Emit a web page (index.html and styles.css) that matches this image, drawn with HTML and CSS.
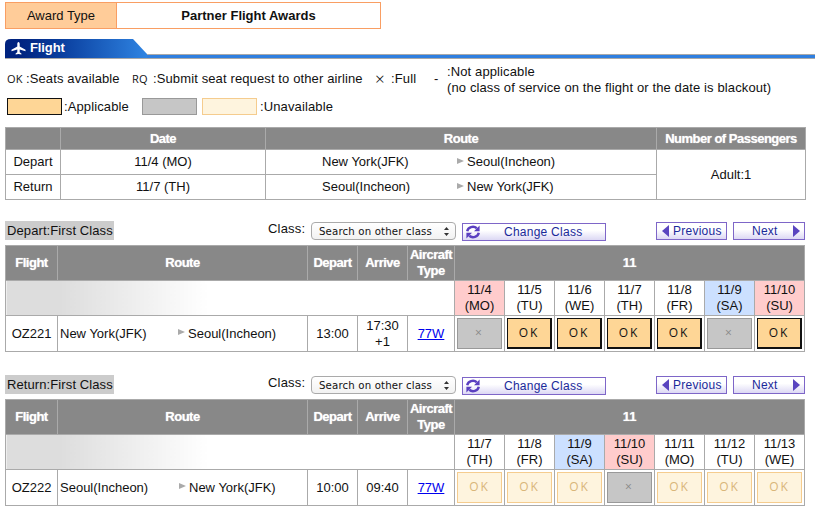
FILE: index.html
```html
<!DOCTYPE html>
<html lang="en">
<head>
<meta charset="utf-8">
<title>Partner Flight Awards</title>
<link rel="stylesheet" href="styles.css">
</head>
<body>
<div class="award">
  <div class="award-label">Award Type</div>
  <div class="award-value">Partner Flight Awards</div>
</div>

<div class="section-bar">
  <div class="tab">
    <svg class="tab-bg" width="142" height="19" viewBox="0 0 142 19"><defs><linearGradient id="tabg" x1="0" x2="1" y1="0" y2="0"><stop offset="0.1" stop-color="#00237f"/><stop offset="0.4" stop-color="#0a3f9f"/><stop offset="1" stop-color="#2f84e2"/></linearGradient></defs><path d="M0 19V5Q0 0 6 0H128L142 15V19Z" fill="url(#tabg)"/></svg>
    <svg class="plane" width="15" height="13" viewBox="0 0 15 13"><path d="M7.5 0C8.3 0 8.7 1 8.7 2V4.6L14.5 7.8V9.2L8.7 7.6V10.2L10.4 11.6V12.6L7.5 12 4.6 12.6V11.6L6.3 10.2V7.6L.5 9.2V7.8L6.3 4.6V2C6.3 1 6.7 0 7.5 0Z" fill="#fff"/></svg>
    <span class="tab-text">Flight</span>
  </div>
</div>

<div class="legend">
  <span class="mono k-ok">OK</span><span class="l-ok">:Seats available</span>
  <span class="mono k-rq">RQ</span><span class="l-rq">:Submit seat request to other airline</span>
  <span class="k-x">×</span><span class="l-x">:Full</span>
  <span class="k-dash">-</span><span class="l-na">:Not applicable<br>(no class of service on the flight or the date is blackout)</span>
</div>
<div class="legend2">
  <span class="swatch sw-a"></span><span class="l-a">:Applicable</span>
  <span class="swatch sw-f"></span><span class="swatch sw-u"></span><span>:Unavailable</span>
</div>

<table class="summary">
  <colgroup><col class="s1"><col class="s2"><col class="s3"><col class="s4"></colgroup>
  <tr class="sum-head"><th></th><th>Date</th><th>Route</th><th class="pax-h">Number of Passengers</th></tr>
  <tr class="sum-r1"><td>Depart</td><td>11/4 (MO)</td><td><div class="sum-route"><span class="from">New York(JFK)</span><i class="arrow"></i><span>Seoul(Incheon)</span></div></td><td rowspan="2">Adult:1</td></tr>
  <tr class="sum-r2"><td>Return</td><td>11/7 (TH)</td><td><div class="sum-route"><span class="from">Seoul(Incheon)</span><i class="arrow"></i><span>New York(JFK)</span></div></td></tr>
</table>

<div class="toolbar t1">
  <div class="title">Depart:First Class</div>
  <div class="class-label">Class:</div>
  <div class="select-wrap"><select class="select"><option>Search on other class</option></select><svg class="updown" width="7" height="11" viewBox="0 0 7 11"><path d="M3.5 1 6 4H1ZM3.5 10 1 7H6Z" fill="#333"/></svg></div>
  <a class="btn change"><svg width="18" height="16" viewBox="0 0 18 16"><path d="M3.2 7.2A5.8 5.3 0 0 1 12.8 4.2M14.8 8.8A5.8 5.3 0 0 1 5.2 11.8" fill="none" stroke="#5a3fc0" stroke-width="2.4"/><path d="M15.6 1.6V7.2H10ZM2.4 14.4V8.8H8Z" fill="#5a3fc0"/></svg><span>Change Class</span></a>
  <a class="btn prev"><i class="tri-l"></i><span>Previous</span></a>
  <a class="btn next"><span>Next</span><i class="tri-r"></i></a>
</div>
<table class="flights">
  <colgroup><col class="f1"><col class="f2"><col class="f3"><col class="f4"><col class="f5"><col class="d"><col class="d"><col class="d"><col class="d"><col class="d"><col class="d"><col class="d"></colgroup>
  <tr class="fh"><th>Flight</th><th>Route</th><th>Depart</th><th>Arrive</th><th class="type">Aircraft<br>Type</th><th colspan="7" class="month">11</th></tr>
  <tr class="dates"><td colspan="5" class="fade"></td><td class="sun">11/4<br>(MO)</td><td>11/5<br>(TU)</td><td>11/6<br>(WE)</td><td>11/7<br>(TH)</td><td>11/8<br>(FR)</td><td class="sat">11/9<br>(SA)</td><td class="sun">11/10<br>(SU)</td></tr>
  <tr class="row">
    <td>OZ221</td>
    <td><div class="f-route"><span class="from">New York(JFK)</span><i class="arrow"></i><span>Seoul(Incheon)</span></div></td>
    <td>13:00</td><td>17:30<br>+1</td><td><a class="link">77W</a></td>
    <td><span class="seat full">×</span></td><td><span class="seat ok">OK</span></td><td><span class="seat ok">OK</span></td><td><span class="seat ok">OK</span></td><td><span class="seat ok">OK</span></td><td><span class="seat full">×</span></td><td><span class="seat ok">OK</span></td>
  </tr>
</table>

<div class="toolbar t2">
  <div class="title">Return:First Class</div>
  <div class="class-label">Class:</div>
  <div class="select-wrap"><select class="select"><option>Search on other class</option></select><svg class="updown" width="7" height="11" viewBox="0 0 7 11"><path d="M3.5 1 6 4H1ZM3.5 10 1 7H6Z" fill="#333"/></svg></div>
  <a class="btn change"><svg width="18" height="16" viewBox="0 0 18 16"><path d="M3.2 7.2A5.8 5.3 0 0 1 12.8 4.2M14.8 8.8A5.8 5.3 0 0 1 5.2 11.8" fill="none" stroke="#5a3fc0" stroke-width="2.4"/><path d="M15.6 1.6V7.2H10ZM2.4 14.4V8.8H8Z" fill="#5a3fc0"/></svg><span>Change Class</span></a>
  <a class="btn prev"><i class="tri-l"></i><span>Previous</span></a>
  <a class="btn next"><span>Next</span><i class="tri-r"></i></a>
</div>
<table class="flights">
  <colgroup><col class="f1"><col class="f2"><col class="f3"><col class="f4"><col class="f5"><col class="d"><col class="d"><col class="d"><col class="d"><col class="d"><col class="d"><col class="d"></colgroup>
  <tr class="fh"><th>Flight</th><th>Route</th><th>Depart</th><th>Arrive</th><th class="type">Aircraft<br>Type</th><th colspan="7" class="month">11</th></tr>
  <tr class="dates"><td colspan="5" class="fade"></td><td>11/7<br>(TH)</td><td>11/8<br>(FR)</td><td class="sat">11/9<br>(SA)</td><td class="sun">11/10<br>(SU)</td><td>11/11<br>(MO)</td><td>11/12<br>(TU)</td><td>11/13<br>(WE)</td></tr>
  <tr class="row">
    <td>OZ222</td>
    <td><div class="f-route wide"><span class="from">Seoul(Incheon)</span><i class="arrow"></i><span>New York(JFK)</span></div></td>
    <td>10:00</td><td>09:40</td><td><a class="link">77W</a></td>
    <td><span class="seat un">OK</span></td><td><span class="seat un">OK</span></td><td><span class="seat un">OK</span></td><td><span class="seat full">×</span></td><td><span class="seat un">OK</span></td><td><span class="seat un">OK</span></td><td><span class="seat un">OK</span></td>
  </tr>
</table>
</body>
</html>
```
FILE: styles.css
```css
* { box-sizing: border-box; }
html, body { margin: 0; background: #fff; }
body { padding: 2px 10px 0 5px; width: 815px; height: 516px; overflow: hidden; font: 13px/16px "Liberation Sans", Arial, sans-serif; color: #111; }

.award { display: flex; width: 376px; height: 27px; border: 1px solid #f99e63; }
.award-label { width: 111px; background: #fc9; border-right: 1px solid #f99e63; text-align: center; line-height: 25px; }
.award-value { flex: 1; text-align: center; font-weight: 700; line-height: 25px; }

.section-bar { margin-top: 10px; height: 20px; width: 810px; border-bottom: 1px solid #a9a9a9; background: linear-gradient(#a9a9a9 0 1px, #2f7fe0 1px); background-size: 100% 4px; background-position: 0 15px; background-repeat: no-repeat; }
.tab { position: relative; height: 19px; display: flex; align-items: center; padding: 0 0 1px 6px; }
.tab-bg { position: absolute; left: 0; top: 0; }
.plane { position: relative; margin-right: 4px; }
.tab-text { position: relative; color: #fff; font-weight: 700; letter-spacing: -.1px; }

.legend { position: relative; margin-top: 6px; height: 29px; white-space: nowrap; letter-spacing: .12px; }
.legend span { position: absolute; top: 6px; }
.legend .mono { font: 400 11px/16px "Open Sans", sans-serif; letter-spacing: .2px; }
.k-ok { left: 2px; }
.l-ok { left: 21px; }
.k-rq { left: 127px; }
.l-rq { left: 148px; }
.legend .k-x { left: 370px; top: 5px; font: 300 17px/18px "Noto Sans", sans-serif; }
.l-x { left: 386px; }
.k-dash { left: 429px; }
.legend .l-na { left: 442px; top: -1px; }

.legend2 { display: flex; align-items: center; height: 17px; margin-top: 4px; margin-left: 2px; letter-spacing: .12px; }
.swatch { display: block; width: 55px; height: 17px; }
.sw-a { background: #fed696; border: 1px solid #111; }
.l-a { margin-left: 2px; width: 78px; }
.sw-f { background: #c6c6c6; border: 1px solid #999; margin-right: 5px; }
.sw-u { background: #fef4de; border: 1px solid #f5cc8e; margin-right: 3px; }

table { border-collapse: collapse; table-layout: fixed; }
th { background: #888; color: #fff; font-weight: 700; border: 1px solid #aaa; padding: 0; letter-spacing: -.5px; text-shadow: 0 0 1px #ddd; }
td { border: 1px solid #aaa; text-align: center; padding: 0; }

.summary { width: 800px; margin-top: 12px; }
.s1 { width: 55px; } .s2 { width: 205px; } .s3 { width: 391px; } .s4 { width: 149px; }
.sum-head { height: 22px; }
.sum-r1 { height: 25px; } .sum-r2 { height: 25px; }
.sum-route { display: flex; align-items: center; padding-left: 56px; }
.from { display: block; width: 135px; text-align: left; }
.arrow { display: block; width: 0; height: 0; border-left: 7px solid #aaa; border-top: 3.5px solid transparent; border-bottom: 3.5px solid transparent; margin: -3px 3px 0 0; }

.toolbar { display: flex; align-items: flex-start; height: 24px; }
.t1 { margin-top: 21px; }
.t2 { margin-top: 23px; }
.title { width: 109px; height: 19px; background: #ccc; line-height: 19px; padding-left: 2px; white-space: nowrap; letter-spacing: .1px; }
.class-label { margin-left: 154px; width: 43px; line-height: 15px; letter-spacing: .2px; }
.select-wrap { position: relative; width: 145px; height: 18px; margin-top: 1px; }
.select { appearance: none; -webkit-appearance: none; display: block; width: 145px; height: 18px; border: 1px solid #aaa; border-radius: 4px; background: linear-gradient(#fff, #f2f2f2); font: 10.2px "DejaVu Sans", sans-serif; letter-spacing: .15px; padding: 0 0 0 7px; color: #111; }
.updown { position: absolute; right: 6px; top: 4px; }
.btn { display: flex; align-items: center; height: 18px; border: 1px solid #7e66c8; background: linear-gradient(#fff 40%, #dcd8f4); color: #1a2a9a; font-size: 12px; letter-spacing: .25px; margin-top: 2px; }
.change { width: 144px; margin-left: 6px; }
.change svg { margin-left: 1px; }
.change span { margin-left: 22px; }
.prev { width: 71px; margin-left: 50px; margin-top: 1px; }
.next { width: 72px; margin-left: 6px; margin-top: 1px; }
.tri-l { width: 0; height: 0; border-right: 7px solid #5a45c0; border-top: 6px solid transparent; border-bottom: 6px solid transparent; margin: 0 4px 0 5px; }
.tri-r { width: 0; height: 0; border-left: 7px solid #5a45c0; border-top: 6px solid transparent; border-bottom: 6px solid transparent; margin-left: 15px; }
.next span { margin-left: 18px; }

.flights { width: 800px; }
.f1 { width: 52px; } .f2 { width: 250px; } .f3 { width: 50px; } .f4 { width: 50px; } .f5 { width: 47px; } .d { width: 50px; }
.fh { height: 35px; }
.month { letter-spacing: 0; }
.dates { height: 35px; }
.fade { background: linear-gradient(90deg, #ddd 0, #ddd 12%, #fff 45%); }
.sun { background: #fcc; }
.sat { background: #cce0ff; }
.row { height: 36px; }
.f-route { display: flex; align-items: center; padding-left: 2px; }
.f-route .from { width: 118px; }
.f-route.wide .from { width: 119px; }
.link { color: #00e; text-decoration: underline; }
.seat { display: block; width: 45px; height: 31px; margin: 0 auto; font: 400 12px/28px "Open Sans", sans-serif; letter-spacing: 2px; }
.ok { background: #fed696; border: 1px solid #111; border-width: 1px 2px 2px 1px; }
.full { background: #c6c6c6; border: 1px solid #999; color: #888; }
.un { background: #fef4de; border: 1px solid #f5cc8e; color: #d9b67a; }
```
